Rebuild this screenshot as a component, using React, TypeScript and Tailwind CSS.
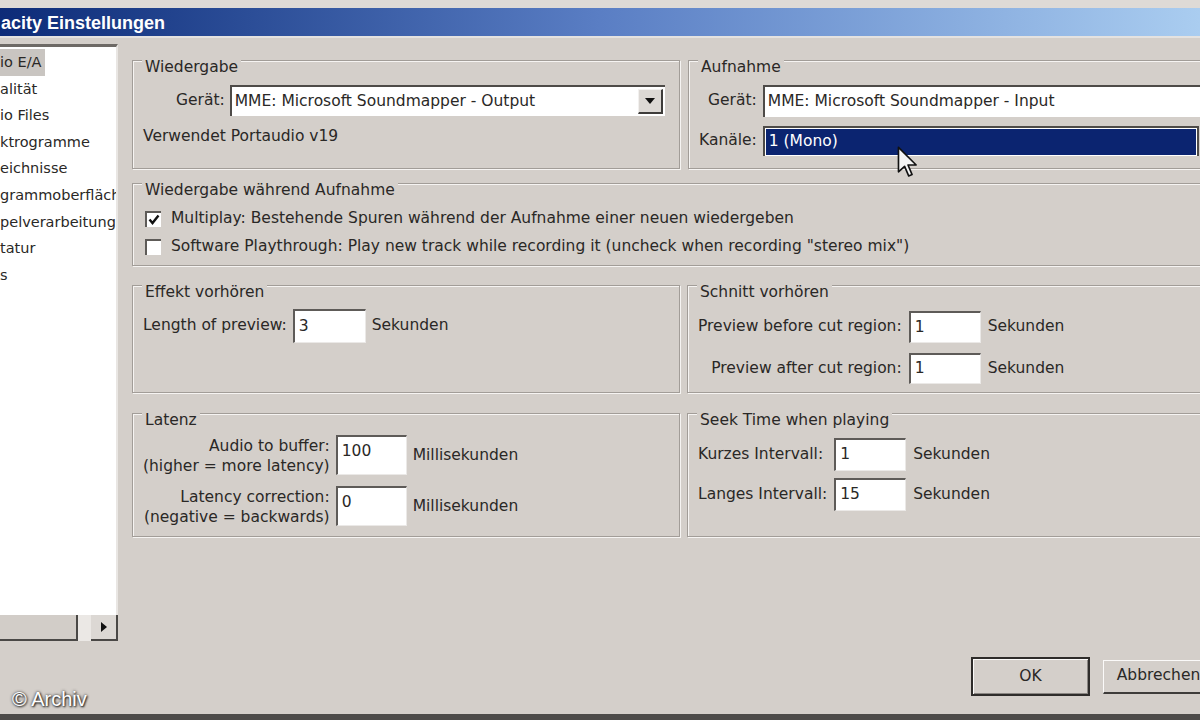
import React from "react";

type GroupProps = { title: string; className: string; children?: React.ReactNode };

function Group({ title, className, children }: GroupProps) {
  return (
    <div className={`border border-[#a29d98] shadow-[inset_1px_1px_0_#f6f4f2,1px_1px_0_#f6f4f2] ${className}`}>
      <div className="-mt-[3px] ml-[9px] w-fit bg-[#d4cfca] px-[3px] leading-[18px]">{title}</div>
      {children}
    </div>
  );
}

function Field({ value, className }: { value: string; className: string }) {
  return (
    <div
      className={`flex border-t-2 border-l-2 border-t-[#5e5b58] border-l-[#5e5b58] border-r border-b border-r-[#ebe9e7] border-b-[#ebe9e7] bg-white pl-[4px] ${className}`}
    >
      {value}
    </div>
  );
}

function CheckBox({ checked }: { checked?: boolean }) {
  return (
    <div className="flex h-[16px] w-[16px] items-center justify-center border-t-2 border-l-2 border-t-[#5e5b58] border-l-[#5e5b58] bg-white">
      {checked && (
        <svg width="12" height="12" viewBox="0 0 12 12">
          <polyline points="1.5,5.5 4.5,9 10.5,1.5" fill="none" stroke="#111" strokeWidth="2.4" />
        </svg>
      )}
    </div>
  );
}

const items = ["io E/A", "alität", "io Files", "ktrogramme", "eichnisse", "grammoberfläch", "pelverarbeitung", "tatur", "s"];

export default function App() {
  return (
    <div className="relative flex h-[720px] w-[1200px] flex-col overflow-hidden bg-[#d4cfca] font-['DejaVu_Sans',sans-serif] text-[15.5px] text-[#2a2826]">
      <div className="h-[8px] bg-[#dedad6]" />
      <div className="flex h-[30px] items-center border-b-2 border-b-[#e4e2e0] bg-linear-to-r from-[#0d2b78] via-[#5a7ec4] to-[#aacdf0] pl-[1px] pt-[2px] font-['Liberation_Sans',sans-serif] text-[18px] font-bold text-white">
        acity Einstellungen
      </div>

      <div className="flex flex-1">
        {/* left tree list */}
        <div className="mt-[6px] flex h-[597px] w-[118px] flex-col">
          <div className="flex-1 overflow-hidden border-t-[3px] border-r-2 border-t-[#6e6a66] border-r-[#e9e6e3] bg-white pt-[2px] text-[14.5px] leading-[26.6px]">
            {items.map((it, i) => (
              <div key={it} className="whitespace-nowrap">
                <span className={i === 0 ? "inline-block bg-[#c9c5c1] pr-[4px]" : ""}>{it}</span>
              </div>
            ))}
          </div>
          <div className="flex h-[26px] bg-[#ebe8e5]">
            <div className="w-[78px] border-r-2 border-b-2 border-r-[#4a4846] border-b-[#4a4846] bg-[#d2cdc8]" />
            <div className="flex-1" />
            <div className="flex w-[27px] items-center justify-center border-r-2 border-b-2 border-r-[#4a4846] border-b-[#4a4846] bg-[#dcd8d4]">
              <svg width="6" height="10" viewBox="0 0 6 10">
                <polygon points="0,0 6,5 0,10" fill="#111" />
              </svg>
            </div>
          </div>
        </div>

        {/* main panel */}
        <div className="flex flex-1 flex-col pl-[14px] pt-[22px]">
          <div className="flex gap-[8px]">
            <Group title="Wiedergabe" className="h-[109px] w-[548px] shrink-0">
              <div className="mt-[9px] ml-[43px] flex items-center gap-[5px]">
                <span>Gerät:</span>
                <div className="flex h-[31px] w-[435px] items-center border-t-2 border-l-2 border-t-[#4e4b48] border-l-[#4e4b48] bg-white pl-[3px] pr-[2px]">
                  <span className="flex-1">MME: Microsoft Soundmapper - Output</span>
                  <div className="flex h-[25px] w-[25px] items-center justify-center border-t border-l border-r-2 border-b-2 border-t-[#f2f0ee] border-l-[#f2f0ee] border-r-[#3e3c3a] border-b-[#3e3c3a] bg-[#dcd8d4]">
                    <svg width="10" height="6" viewBox="0 0 10 6">
                      <polygon points="0,0 10,0 5,6" fill="#111" />
                    </svg>
                  </div>
                </div>
              </div>
              <div className="mt-[9px] ml-[10px]">Verwendet Portaudio v19</div>
            </Group>

            <Group title="Aufnahme" className="h-[109px] w-[540px] shrink-0">
              <div className="mt-[9px] grid grid-cols-[auto_1fr] items-center gap-x-[6px] gap-y-[9px] pl-[10px]">
                <span className="text-right">Gerät:</span>
                <div className="flex h-[32px] items-center border-t-2 border-l-2 border-t-[#4e4b48] border-l-[#4e4b48] bg-white pl-[3px]">
                  MME: Microsoft Soundmapper - Input
                </div>
                <span className="text-right">Kanäle:</span>
                <div className="flex h-[30px] w-[436px] items-center border-t-2 border-l-2 border-r-2 border-t-[#4e4b48] border-l-[#4e4b48] border-r-[#4e4b48] bg-white p-[1px]">
                  <div className="flex h-full flex-1 items-center bg-[#0b2470] pl-[3px] text-white">1 (Mono)</div>
                </div>
              </div>
            </Group>
          </div>

          <Group title="Wiedergabe während Aufnahme" className="mt-[14px] h-[83px] w-[1090px] shrink-0">
            <div className="mt-[6px] ml-[12px] flex h-[28px] items-center gap-[10px]">
              <CheckBox checked />
              <span>Multiplay: Bestehende Spuren während der Aufnahme einer neuen wiedergeben</span>
            </div>
            <div className="ml-[12px] flex h-[28px] items-center gap-[10px]">
              <CheckBox />
              <span>Software Playthrough: Play new track while recording it (uncheck when recording "stereo mix")</span>
            </div>
          </Group>

          <div className="mt-[19px] flex gap-[7px]">
            <Group title="Effekt vorhören" className="h-[108px] w-[548px] shrink-0">
              <div className="mt-[8px] ml-[10px] flex items-center gap-[6px]">
                <span>Length of preview:</span>
                <Field value="3" className="h-[34px] w-[73px] items-center" />
                <span>Sekunden</span>
              </div>
            </Group>
            <Group title="Schnitt vorhören" className="h-[108px] w-[540px] shrink-0">
              <div className="mt-[10px] grid w-fit grid-cols-[auto_auto_auto] items-center gap-x-[7px] gap-y-[10px] pl-[10px]">
                <span className="text-right">Preview before cut region:</span>
                <Field value="1" className="h-[32px] w-[72px] items-center" />
                <span>Sekunden</span>
                <span className="text-right">Preview after cut region:</span>
                <Field value="1" className="h-[31px] w-[72px] items-center" />
                <span>Sekunden</span>
              </div>
            </Group>
          </div>

          <div className="mt-[20px] flex gap-[7px]">
            <Group title="Latenz" className="h-[124px] w-[548px] shrink-0">
              <div className="mt-[4px] grid w-fit grid-cols-[auto_auto_auto] items-center gap-x-[6px] gap-y-[8px] pl-[10px] leading-[20px]">
                <span className="pt-[3px] text-right">
                  Audio to buffer:
                  <br />
                  (higher = more latency)
                </span>
                <Field value="100" className="h-[40px] w-[71px] pt-[4px]" />
                <span>Millisekunden</span>
                <span className="pt-[3px] text-right">
                  Latency correction:
                  <br />
                  (negative = backwards)
                </span>
                <Field value="0" className="h-[40px] w-[71px] pt-[4px]" />
                <span>Millisekunden</span>
              </div>
            </Group>
            <Group title="Seek Time when playing" className="h-[124px] w-[540px] shrink-0">
              <div className="mt-[9px] grid w-fit grid-cols-[auto_auto_auto] items-center gap-x-[7px] gap-y-[7px] pl-[10px]">
                <span>Kurzes Intervall:</span>
                <Field value="1" className="h-[33px] w-[72px] items-center" />
                <span>Sekunden</span>
                <span>Langes Intervall:</span>
                <Field value="15" className="h-[33px] w-[72px] items-center" />
                <span>Sekunden</span>
              </div>
            </Group>
          </div>

          <div className="mt-[120px] ml-[839px] flex items-center gap-[13px]">
            <div className="flex h-[39px] w-[119px] shrink-0 items-center justify-center border-2 border-[#2e2c2a] bg-[#d4cfca] shadow-[inset_1px_1px_0_#fbfaf9,inset_-1px_-1px_0_#8a8682]">
              OK
            </div>
            <div className="flex h-[34px] w-[112px] shrink-0 items-center justify-center border-t border-l border-r-2 border-b-2 border-t-[#fbfaf9] border-l-[#fbfaf9] border-r-[#3e3c3a] border-b-[#3e3c3a] bg-[#d4cfca]">
              Abbrechen
            </div>
          </div>
        </div>
      </div>

      <div className="h-[6px] bg-[#4d4b49]" />

      <div className="absolute left-[12px] top-[684px] font-['Liberation_Sans',sans-serif] text-[20px] text-white [text-shadow:0_0_3px_#222,1px_1px_2px_#222]">
        © Archiv
      </div>

      <svg className="absolute left-[897px] top-[146px]" width="22" height="34" viewBox="0 0 16 25">
        <path d="M1 1 L1 19 L5.5 15 L8.5 22 L11 21 L8 14 L14 14 Z" fill="#f4f4f4" stroke="#111" strokeWidth="1.2" strokeLinejoin="round" />
      </svg>
    </div>
  );
}
